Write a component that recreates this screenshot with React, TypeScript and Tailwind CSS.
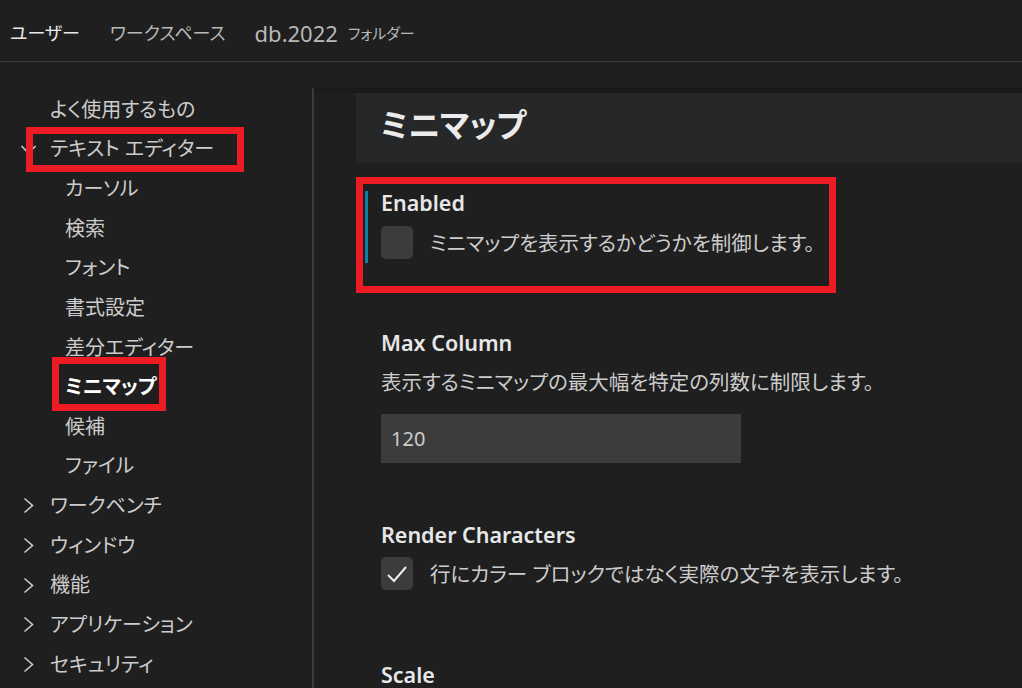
import React from "react";

const FONT = { fontFamily: '"Noto Sans", "Noto Sans CJK JP", sans-serif' };

function ChevronRight() {
  return (
    <svg width="12" height="17" viewBox="0 0 12 17" className="shrink-0">
      <path d="M1.5 1.5 L9.5 8.5 L1.5 15.5" fill="none" stroke="#cccccc" strokeWidth="1.6" />
    </svg>
  );
}

function ChevronDown() {
  return (
    <svg width="17" height="12" viewBox="0 0 17 12" className="shrink-0">
      <path d="M1.5 2 L8.5 9 L15.5 2" fill="none" stroke="#cccccc" strokeWidth="1.6" />
    </svg>
  );
}

function Row({ children, indent, chevron, bold }: { children: React.ReactNode; indent: number; chevron?: "down" | "right"; bold?: boolean }) {
  return (
    <div className="h-[39.64px] flex items-center relative" style={{ paddingLeft: indent }}>
      {chevron === "right" && (
        <span className="absolute left-[23px] top-[11px]"><ChevronRight /></span>
      )}
      {chevron === "down" && (
        <span className="absolute left-[20px] top-[14px]"><ChevronDown /></span>
      )}
      <span className={bold ? "text-white font-bold text-[20px] leading-[28px]" : "text-[#cccccc] text-[20px] leading-[28px]"}>
        {children}
      </span>
    </div>
  );
}

export default function App() {
  return (
    <div
      className="relative w-[1022px] h-[688px] bg-[#1f1f1f] overflow-hidden [font-feature-settings:'palt']"
      style={FONT}
    >
      {/* top bar */}
      <div className="h-[62px] border-b border-[#3a3a3a] flex items-center pl-[10px] pt-[4px]">
        <span className="text-[#e8e8e8] text-[18px] leading-[30px]">ユーザー</span>
        <span className="ml-[30px] text-[#b8b8b8] text-[18px] leading-[30px]">ワークスペース</span>
        <span className="ml-[29px] text-[#b8b8b8] text-[22px] leading-[30px]">db.2022</span>
        <span className="ml-[10px] text-[#b8b8b8] text-[15px] leading-[30px]">フォルダー</span>
      </div>

      <div className="flex pt-[26px] h-[626px]">
        {/* sidebar */}
        <div className="w-[312px] shrink-0 pt-[2px]">
          <Row indent={50}>よく使用するもの</Row>
          <Row indent={50} chevron="down">テキスト エディター</Row>
          <Row indent={65}>カーソル</Row>
          <Row indent={65}>検索</Row>
          <Row indent={65}>フォント</Row>
          <Row indent={65}>書式設定</Row>
          <Row indent={65}>差分エディター</Row>
          <Row indent={65} bold>ミニマップ</Row>
          <Row indent={65}>候補</Row>
          <Row indent={65}>ファイル</Row>
          <Row indent={50} chevron="right">ワークベンチ</Row>
          <Row indent={50} chevron="right">ウィンドウ</Row>
          <Row indent={50} chevron="right">機能</Row>
          <Row indent={50} chevron="right">アプリケーション</Row>
          <Row indent={50} chevron="right">セキュリティ</Row>
        </div>
        <div className="w-[2px] shrink-0 bg-[#3c3c3c]" />

        {/* main */}
        <div className="flex-1 relative">
          <div className="h-[5px] bg-[#1a1a1a]" />
          <div className="ml-[42px] h-[70px] bg-[#262729] flex items-center pl-[24px] pb-[6px]">
            <span className="text-[#ebebeb] text-[32px] font-semibold leading-[44px]">ミニマップ</span>
          </div>

          {/* Enabled */}
          <div className="ml-[51px] mt-[28px] border-l-[3px] border-[#127ea6] pl-[13px] pb-[4px]">
            <div className="text-[#e7e7e7] text-[21.5px] font-semibold leading-[24px]">Enabled</div>
            <div className="mt-[11px] flex items-center">
              <div className="w-[32px] h-[33px] rounded-[5px] bg-[#3c3c3c]" />
              <span className="ml-[17px] text-[#cccccc] text-[20.5px] leading-[28px]">ミニマップを表示するかどうかを制御します。</span>
            </div>
          </div>

          {/* Max Column */}
          <div className="ml-[67px] mt-[68px]">
            <div className="text-[#e7e7e7] text-[21.5px] font-semibold leading-[24px]">Max Column</div>
            <div className="mt-[15px] text-[#cccccc] text-[20.5px] leading-[24px]">表示するミニマップの最大幅を特定の列数に制限します。</div>
            <div className="mt-[20px] w-[360px] h-[49px] bg-[#3c3c3c] flex items-center pl-[10px]">
              <span className="text-[#cccccc] text-[20px] leading-[24px]">120</span>
            </div>
          </div>

          {/* Render Characters */}
          <div className="ml-[67px] mt-[60px]">
            <div className="text-[#e7e7e7] text-[21.5px] font-semibold leading-[24px]">Render Characters</div>
            <div className="mt-[10px] flex items-center">
              <div className="w-[32px] h-[33px] rounded-[5px] bg-[#3c3c3c] flex items-center justify-center">
                <svg width="22" height="20" viewBox="0 0 22 20">
                  <path d="M2 11 L8 17 L20 3" fill="none" stroke="#f0f0f0" strokeWidth="2" />
                </svg>
              </div>
              <span className="ml-[17px] text-[#cccccc] text-[20.5px] leading-[28px]">行にカラー ブロックではなく実際の文字を表示します。</span>
            </div>
          </div>

          {/* Scale */}
          <div className="ml-[67px] mt-[73px]">
            <div className="text-[#e7e7e7] text-[21.5px] font-semibold leading-[24px]">Scale</div>
          </div>
        </div>
      </div>

      {/* red annotation boxes */}
      <div className="absolute left-[26px] top-[127px] w-[218px] h-[45px] border-[7px] border-[#ed1c24]" />
      <div className="absolute left-[52px] top-[357px] w-[114px] h-[54px] border-[7px] border-[#ed1c24]" />
      <div className="absolute left-[356px] top-[177px] w-[480px] h-[116px] border-[7px] border-[#ed1c24]" />
    </div>
  );
}
